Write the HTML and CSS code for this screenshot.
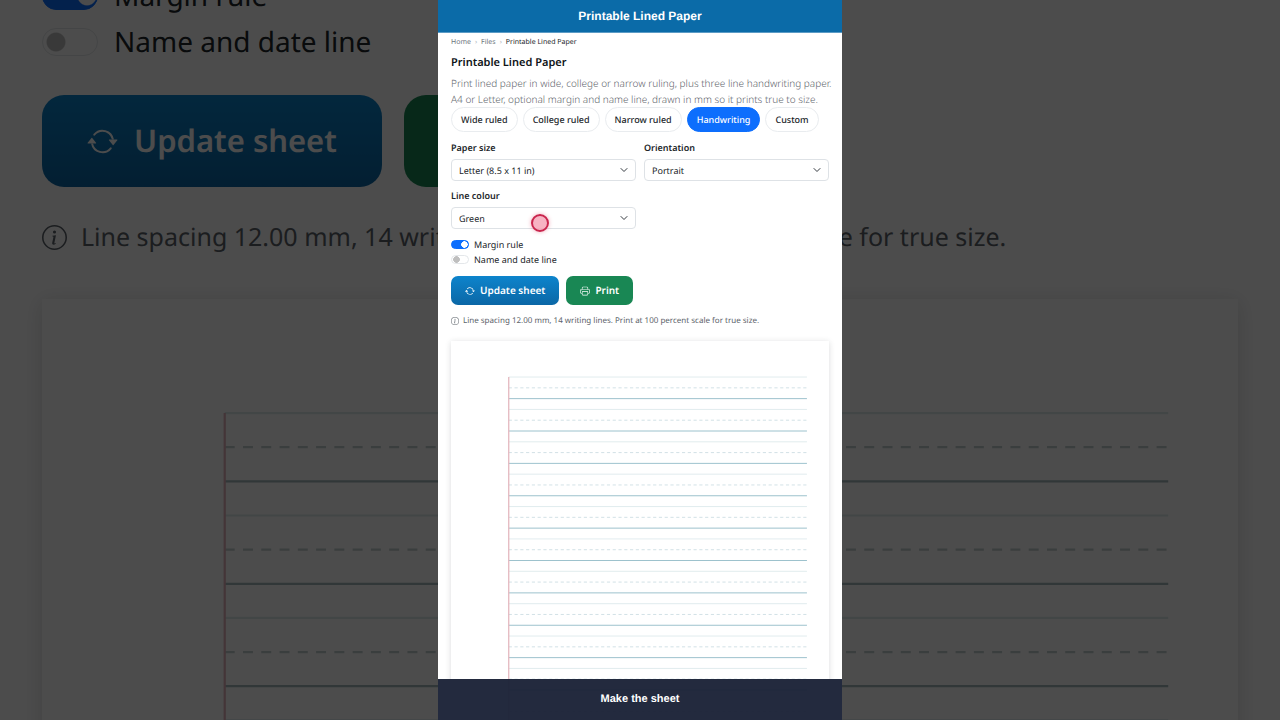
FILE: index.html
```
<!DOCTYPE html>
<html lang="en">
<head>
  <meta charset="UTF-8" />
  <meta name="viewport" content="width=device-width, initial-scale=1" />
  <title>Printable Lined Paper</title>
  <link rel="stylesheet" href="styles.css">
</head>
<body>
  <svg class="defs" aria-hidden="true">
    <symbol id="icon-refresh" viewBox="0 0 16 16">
      <path d="M11.534 7h3.932a.25.25 0 0 1 .192.41l-1.966 2.36a.25.25 0 0 1-.384 0l-1.966-2.36a.25.25 0 0 1 .192-.41m-11 2h3.932a.25.25 0 0 0 .192-.41L2.692 6.23a.25.25 0 0 0-.384 0L.342 8.59A.25.25 0 0 0 .534 9" />
      <path d="M8 3c-1.552 0-2.94.707-3.857 1.818a.5.5 0 1 1-.771-.636A6.002 6.002 0 0 1 13.917 7H12.900A5 5 0 0 0 8 3M3.100 9a5.002 5.002 0 0 0 8.757 2.182.5.5 0 1 1 .771.636A6.002 6.002 0 0 1 2.083 9z" />
    </symbol>
    <symbol id="icon-print" viewBox="0 0 16 16">
      <path d="M2.500 8a.5.5 0 1 0 0-1 .5.5 0 0 0 0 1" />
      <path d="M5 1a2 2 0 0 0-2 2v2H2a2 2 0 0 0-2 2v3a2 2 0 0 0 2 2h1v1a2 2 0 0 0 2 2h6a2 2 0 0 0 2-2v-1h1a2 2 0 0 0 2-2V7a2 2 0 0 0-2-2h-1V3a2 2 0 0 0-2-2zM4 3a1 1 0 0 1 1-1h6a1 1 0 0 1 1 1v2H4zm1 5a2 2 0 0 0-2 2v1H2a1 1 0 0 1-1-1V7a1 1 0 0 1 1-1h12a1 1 0 0 1 1 1v3a1 1 0 0 1-1 1h-1v-1a2 2 0 0 0-2-2zm7 2v3a1 1 0 0 1-1 1H5a1 1 0 0 1-1-1v-3a1 1 0 0 1 1-1h6a1 1 0 0 1 1 1" />
    </symbol>
    <symbol id="icon-info" viewBox="0 0 16 16">
      <path d="M8 15A7 7 0 1 1 8 1a7 7 0 0 1 0 14m0 1A8 8 0 1 0 8 0a8 8 0 0 0 0 16" />
      <path d="m8.930 6.588-2.290.287-.082.380.450.083c.294.070.352.176.288.469l-.738 3.468c-.194.897.105 1.319.808 1.319.545 0 1.178-.252 1.465-.598l.088-.416c-.200.176-.492.246-.686.246-.275 0-.375-.193-.304-.533zM9 4.500a1 1 0 1 1-2 0 1 1 0 0 1 2 0" />
    </symbol>
  </svg>

  <!-- Enlarged, dimmed copy of the tool behind the phone frame -->
  <div class="backdrop" inert>
    <label class="switch"><input type="checkbox" checked /> Margin rule</label>
    <label class="switch"><input type="checkbox" /> Name and date line</label>
    <div class="actions">
      <button type="button" class="btn btn-update"><svg class="icon"><use href="#icon-refresh" /></svg>Update sheet</button>
      <button type="button" class="btn btn-print" aria-label="Print"><svg class="icon"><use href="#icon-print" /></svg></button>
    </div>
    <p class="note"><svg class="icon"><use href="#icon-info" /></svg>Line spacing 12.00 mm, 14 writing lines. Print at 100 percent scale for true size.</p>
    <svg class="sheet" viewBox="0 0 216 280"></svg>
  </div>

  <div class="phone">
    <header class="top-bar">Printable Lined Paper</header>

    <main class="content">
      <nav class="breadcrumb" aria-label="Breadcrumb">
        <a href="#">Home</a>
        <span class="sep">›</span>
        <a href="#">Files</a>
        <span class="sep">›</span>
        <span class="current">Printable Lined Paper</span>
      </nav>

      <h1>Printable Lined Paper</h1>
      <p class="lead">Print lined paper in wide, college or narrow ruling, plus three line handwriting paper.<br />A4 or Letter, optional margin and name line, drawn in mm so it prints true to size.</p>

      <div class="presets">
        <button type="button" class="chip">Wide ruled</button>
        <button type="button" class="chip">College ruled</button>
        <button type="button" class="chip">Narrow ruled</button>
        <button type="button" class="chip active">Handwriting</button>
        <button type="button" class="chip">Custom</button>
      </div>

      <div class="fields">
        <div class="field">
          <label for="paperSize">Paper size</label>
          <div class="select-wrap">
            <select id="paperSize"><option>Letter (8.5 x 11 in)</option><option>A4</option></select>
            <svg class="chevron" viewBox="0 0 16 16"><path d="m2 5 6 6 6-6" /></svg>
          </div>
        </div>
        <div class="field">
          <label for="orientation">Orientation</label>
          <div class="select-wrap">
            <select id="orientation"><option>Portrait</option><option>Landscape</option></select>
            <svg class="chevron" viewBox="0 0 16 16"><path d="m2 5 6 6 6-6" /></svg>
          </div>
        </div>
        <div class="field">
          <label for="lineColour">Line colour</label>
          <div class="select-wrap">
            <select id="lineColour"><option>Green</option><option>Blue</option></select>
            <svg class="chevron" viewBox="0 0 16 16"><path d="m2 5 6 6 6-6" /></svg>
            <span class="touch"></span>
          </div>
        </div>
      </div>

      <label class="switch"><input type="checkbox" id="marginRule" checked /> Margin rule</label>
      <label class="switch"><input type="checkbox" id="nameLine" /> Name and date line</label>

      <div class="actions">
        <button type="button" class="btn btn-update"><svg class="icon"><use href="#icon-refresh" /></svg>Update sheet</button>
        <button type="button" class="btn btn-print"><svg class="icon"><use href="#icon-print" /></svg>Print</button>
      </div>

      <p class="note"><svg class="icon"><use href="#icon-info" /></svg>Line spacing 12.00 mm, 14 writing lines. Print at 100 percent scale for true size.</p>

      <svg class="sheet" viewBox="0 0 216 280"></svg>
    </main>

    <footer class="caption">Make the sheet</footer>
  </div>

  <script src="script.js"></script>
</body>
</html>
```
FILE: styles.css
```
* {
  box-sizing: border-box;
}

body {
  position: relative;
  margin: 0;
  height: 100vh;
  display: flex;
  justify-content: center;
  overflow: hidden;
  background-color: #4c4c4c;
  color: #212529;
  font-family: "Noto Sans", sans-serif;
  text-rendering: geometricPrecision;
}

h1,
p {
  margin: 0;
}

button,
select,
input {
  font-family: inherit;
  text-rendering: inherit;
  margin: 0;
}

.defs {
  position: absolute;
  width: 0;
  height: 0;
}

.icon {
  width: 1em;
  height: 1em;
  fill: currentColor;
  flex: none;
}

/* Phone frame */
.phone {
  position: relative;
  height: 100%;
  aspect-ratio: 101 / 180;
  display: flex;
  flex-direction: column;
  overflow: hidden;
  background-color: #fff;
}

.top-bar {
  flex: none;
  background-color: #0b6ba8;
  color: #fff;
  font: bold 12px/32px "Liberation Sans", Arial, sans-serif;
  text-align: center;
  border-bottom: 1px solid #5c9bc5;
}

.content {
  flex: 1;
  padding: 4px 13px 0;
}

.caption {
  position: absolute;
  inset: auto 0 0;
  background-color: rgba(26, 33, 54, 0.96);
  color: #fff;
  font: bold 11px/41px "Liberation Sans", Arial, sans-serif;
  text-align: center;
}

.breadcrumb {
  display: flex;
  gap: 4px;
  font-size: 7px;
  line-height: 12px;
}

.breadcrumb a {
  color: #6c757d;
  text-decoration: none;
}

.breadcrumb .sep {
  color: #adb5bd;
}

.breadcrumb .current {
  color: #212529;
}

h1 {
  margin-top: 6px;
  font-size: 11px;
  line-height: 16px;
  font-weight: 600;
  color: #0f1418;
}

.lead {
  margin-top: 4px;
  font-size: 10px;
  line-height: 16px;
  font-weight: 300;
  color: #5f666d;
  white-space: nowrap;
}

.presets {
  display: flex;
  gap: 5px;
}

.chip {
  padding: 0 9px;
  border: 1px solid #e9ecef;
  border-radius: 13px;
  background-color: #fff;
  color: #212529;
  font-size: 9px;
  line-height: 23px;
  font-weight: 500;
  white-space: nowrap;
}

.chip.active {
  background-color: #0d6efd;
  border-color: #0d6efd;
  color: #fff;
}

.fields {
  display: grid;
  grid-template-columns: 1fr 1fr;
  gap: 8px;
  margin-top: 9px;
}

.field label {
  display: block;
  margin-bottom: 4px;
  font-size: 9px;
  line-height: 14px;
  font-weight: 600;
}

.select-wrap {
  position: relative;
}

.select-wrap select {
  display: block;
  width: 100%;
  height: 22px;
  padding: 0 7px;
  appearance: none;
  border: 1px solid #dee2e6;
  border-radius: 4px;
  background-color: #fff;
  color: #212529;
  font-size: 9px;
}

.chevron {
  position: absolute;
  top: 7px;
  right: 8px;
  width: 8px;
  height: 8px;
  fill: none;
  stroke: #343a40;
  stroke-width: 2;
  stroke-linecap: round;
  stroke-linejoin: round;
  pointer-events: none;
}

.touch {
  position: absolute;
  top: 7px;
  left: 80px;
  width: 18px;
  height: 18px;
  border: 2px solid #c9254d;
  border-radius: 50%;
  background-color: rgba(245, 160, 180, 0.8);
  box-shadow: 0 0 4px rgba(220, 53, 90, 0.4);
}

.switch {
  display: flex;
  align-items: center;
  gap: 5px;
  font-size: 9px;
  line-height: 15px;
}

.fields + .switch {
  margin-top: 8px;
}

.switch input {
  width: 18px;
  height: 9px;
  appearance: none;
  border: 1px solid #e4e7ea;
  border-radius: 2em;
  background: radial-gradient(circle closest-side, #bfbfbf 88%, transparent 100%) 10% 50% / 7px 7px no-repeat #fff;
}

.switch input:checked {
  border-color: #0d6efd;
  background: radial-gradient(circle closest-side, #fff 88%, transparent 100%) 100% 50% / 7px 7px no-repeat #0d6efd;
}

.actions {
  display: flex;
  gap: 7px;
  margin-top: 9px;
}

.btn {
  display: flex;
  align-items: center;
  gap: 5px;
  padding: 0 14px;
  border: 0;
  border-radius: 7px;
  color: #fff;
  font-size: 10px;
  line-height: 29px;
  font-weight: 600;
  white-space: nowrap;
}

.btn-update {
  background: linear-gradient(#0d84cc, #0b67a6);
}

.btn-print {
  background-color: #198754;
}

.note {
  display: flex;
  align-items: center;
  gap: 4px;
  margin-top: 10px;
  font-size: 8px;
  line-height: 12px;
  color: #5c636a;
}

.sheet {
  display: block;
  width: 100%;
  margin-top: 14px;
  background-color: #fff;
  box-shadow: 0 1px 6px rgba(33, 37, 41, 0.16);
}

/* Ruling, stroke widths are in mm */
.sheet line {
  stroke-width: 0.5;
}

.rule-top {
  stroke: #dde9ec;
}

.rule-mid {
  stroke: #cbdde2;
  stroke-dasharray: 1.8 1.5;
}

.rule-base {
  stroke: #8fb9c6;
}

.sheet .rule-margin {
  stroke: #e3b3bb;
  stroke-width: 0.7;
}

/* Backdrop */
.backdrop {
  position: absolute;
  inset: 0;
  overflow: hidden;
  padding: 0 42px;
  background-color: #fff;
}

.backdrop::after {
  content: '';
  position: absolute;
  inset: 0;
  background-color: rgba(0, 0, 0, 0.7);
}

.backdrop .switch {
  gap: 16px;
  font-size: 28px;
  line-height: 46px;
}

.backdrop .switch:first-child {
  margin-top: -27px;
}

.backdrop .switch input {
  width: 56px;
  height: 28px;
  background-size: 20px 20px;
}

.backdrop .actions {
  gap: 22px;
  margin-top: 30px;
}

.backdrop .btn {
  gap: 16px;
  padding: 0 45px;
  border-radius: 22px;
  font-size: 31px;
  line-height: 92px;
}

.backdrop .note {
  gap: 14px;
  margin-top: 32px;
  font-size: 25px;
  line-height: 36px;
}

.backdrop .sheet {
  margin-top: 44px;
  box-shadow: 0 3px 19px rgba(33, 37, 41, 0.16);
}

.backdrop .sheet line {
  stroke-width: 0.4;
}

.backdrop .rule-mid {
  stroke: #c3cfd0;
}

.backdrop .rule-base {
  stroke: #a3b8bb;
}
```
FILE: script.js
```
const SVG_NS = 'http://www.w3.org/2000/svg';

// Sheet geometry in mm
const sheet = { left: 33, right: 203.4, top: 20.6, bottom: 268, step: 18.5, rows: 14 };

function addLine(svg, className, x1, y1, x2, y2) {
  const line = document.createElementNS(SVG_NS, 'line');
  line.setAttribute('class', className);
  line.setAttribute('x1', x1);
  line.setAttribute('y1', y1);
  line.setAttribute('x2', x2);
  line.setAttribute('y2', y2);
  svg.appendChild(line);
}

function drawSheet(svg) {
  for (let i = 0; i < sheet.rows; i++) {
    const y = sheet.top + i * sheet.step;
    const third = sheet.step / 3;
    addLine(svg, 'rule-top', sheet.left, y, sheet.right, y);
    addLine(svg, 'rule-mid', sheet.left, y + third, sheet.right, y + third);
    addLine(svg, 'rule-base', sheet.left, y + third * 2, sheet.right, y + third * 2);
  }
  addLine(svg, 'rule-margin', sheet.left, sheet.top, sheet.left, sheet.bottom);
}

document.querySelectorAll('.sheet').forEach(drawSheet);
```
